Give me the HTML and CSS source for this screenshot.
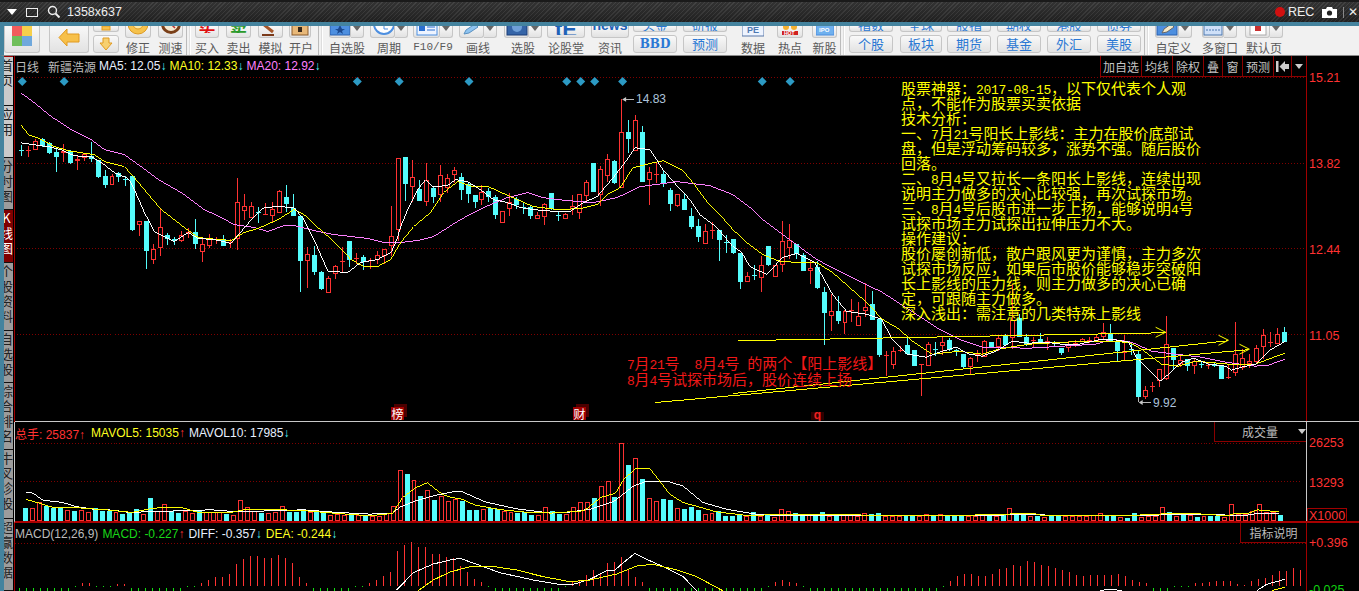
FILE: index.html
```html
<!DOCTYPE html>
<html lang="zh-CN">
<head>
<meta charset="utf-8">
<title>新疆浩源 日线</title>
<link rel="stylesheet" href="styles.css">
</head>
<body>
<header class="recbar">
  <svg class="rb-ico menu" width="12" height="8" viewBox="0 0 12 8"><path d="M1 1h10L6 7z" fill="#fff"/></svg>
  <span class="rb-win"></span>
  <svg class="rb-ico lens" width="14" height="14" viewBox="0 0 14 14"><circle cx="5.500" cy="5.500" r="4" fill="none" stroke="#eee" stroke-width="1.400"/><path d="M8.500 8.500l4 4" stroke="#eee" stroke-width="2"/></svg>
  <span class="rb-size">1358x637</span>
  <span class="rb-dot"></span><span class="rb-rec">REC</span>
  <svg class="rb-ico cam" width="15" height="11" viewBox="0 0 15 11"><path d="M0 2h4l1-2h5l1 2h4v9H0z" fill="#fff"/><circle cx="7.500" cy="6" r="2.600" fill="#222"/></svg>
  <span class="rb-sep"></span>
  <span class="rb-close">✕</span>
</header>

<nav class="toolbar">
  <div class="tool w36"><div class="btn tall"><svg width="20" height="20" viewBox="0 0 20 20"><rect width="10" height="10" fill="#f25c5c"/><rect x="10" width="10" height="10" fill="#f6cf4a"/><rect y="10" width="10" height="10" fill="#6fbe5a"/><rect x="10" y="10" width="10" height="10" fill="#6fa8dc"/></svg></div></div>
  <div class="tool w40 ml9"><div class="btn tall"><svg width="22" height="17" viewBox="0 0 22 17"><path d="M9 0v5h12v8H9v4L1 8.500z" fill="#f7c04a" stroke="#e09a20"/></svg></div></div>
  <div class="stack w26 ml4"><div class="btn stub"><svg width="10" height="5" viewBox="0 0 10 5"><rect x="1" width="8" height="4" fill="#f7c04a" stroke="#e09a20"/></svg></div><div class="btn low"><svg width="14" height="14" viewBox="0 0 14 14"><path d="M4 1h6v5h3l-6 7-6-7h3z" fill="#f7d070" stroke="#e09a20"/></svg></div></div>
  <div class="tool w26 ml6"><div class="btn"><svg width="20" height="11" viewBox="0 0 20 11"><circle cx="10" cy="-1" r="10" fill="#f5c24c" stroke="#dd9a22"/><circle cx="10" cy="-1" r="5" fill="#fbe9a8" stroke="#dd9a22"/></svg></div><span class="lbl">修正</span></div>
  <div class="tool w25 ml7"><div class="btn"><svg width="20" height="11" viewBox="0 0 20 11"><circle cx="10" cy="-1" r="10" fill="#7a3f18"/><circle cx="10" cy="-1" r="7" fill="#f6ead2"/><path d="M10-1l4 4" stroke="#b33" stroke-width="1.500"/></svg></div><span class="lbl">测速</span></div>
  <i class="sep ml3"></i>
  <div class="tool w24 ml5"><div class="btn"><b class="glyph red">买</b></div><span class="lbl">买入</span></div>
  <div class="tool w25 ml7"><div class="btn"><b class="glyph green">卖</b></div><span class="lbl">卖出</span></div>
  <div class="tool w25 ml7"><div class="btn"><svg width="20" height="11" viewBox="0 0 20 11"><path d="M2-1l10 8" stroke="#a5562a" stroke-width="3"/><path d="M1 10h12" stroke="#7a3a1a" stroke-width="2"/></svg></div><span class="lbl">模拟</span></div>
  <div class="tool w22 ml6"><div class="btn"><svg width="18" height="11" viewBox="0 0 18 11"><rect x="1" y="-2" width="16" height="12" fill="#e8b878" stroke="#8a5a2a"/><rect x="7" y="2" width="4" height="5" fill="#3a2a1a"/></svg></div><span class="lbl">开户</span></div>
  <i class="sep ml7"></i>
  <div class="tool w35 ml7"><div class="btn split"><span class="face"><svg width="20" height="10" viewBox="0 0 20 10"><rect y="-4" width="20" height="13" fill="#4d8fe0" stroke="#2a60b0"/><path d="M10-1l2 4h3l-3 2 1 3-3-2-3 2 1-3-3-2h3z" fill="#1c4a90"/></svg></span><span class="drop"></span></div><span class="lbl">自选股</span></div>
  <div class="tool w38 ml6"><div class="btn split"><span class="face"><svg width="22" height="11" viewBox="0 0 22 11"><circle cx="12" cy="-1" r="10" fill="#fff" stroke="#4d8fe0" stroke-width="2"/><path d="M12-1v5M12 4h4" stroke="#4d8fe0"/></svg></span><span class="drop"></span></div><span class="lbl">周期</span></div>
  <div class="tool w40 ml5"><div class="btn split"><span class="face"><svg width="22" height="11" viewBox="0 0 22 11"><rect x="1" y="-3" width="20" height="13" fill="#eef4ff" stroke="#4d8fe0"/><rect x="3" y="0" width="6" height="6" fill="#2a6fd0"/><path d="M11 2h8M11 5h8" stroke="#2a6fd0"/></svg></span><span class="drop"></span></div><span class="lbl mono">F10/F9</span></div>
  <div class="tool w38 ml6"><div class="btn split"><span class="face"><svg width="22" height="11" viewBox="0 0 22 11"><path d="M3 9l2-4 9-6 3 3-9 6z" fill="#8fc4f0" stroke="#5a90c0"/></svg></span><span class="drop"></span></div><span class="lbl">画线</span></div>
  <div class="tool w38 ml7"><div class="btn split"><span class="face"><svg width="22" height="11" viewBox="0 0 22 11"><rect x="1" y="-3" width="20" height="13" fill="#3565a8" stroke="#1c3e78"/><circle cx="11" cy="2" r="5" fill="#6fa0d8"/></svg></span><span class="drop"></span></div><span class="lbl">选股</span></div>
  <div class="tool w38 ml5"><div class="btn"><b class="glyph blue big">tE</b></div><span class="lbl">论股堂</span></div>
  <div class="tool w38 ml6"><div class="btn"><b class="glyph blue news">news</b></div><span class="lbl">资讯</span></div>
  <div class="stack w44 ml4"><div class="btn stub txt">头金</div><div class="btn low txt bold">BBD</div></div>
  <div class="stack w44 ml6"><div class="btn stub txt">研报</div><div class="btn low txt">预测</div></div>
  <div class="tool w24 ml14"><div class="btn bare"><svg width="22" height="11" viewBox="0 0 22 11"><rect y="-6" width="22" height="16" fill="#eef4ff" stroke="#5a78a8"/><text x="5" y="7" class="ico-text">PE</text></svg></div><span class="lbl">数据</span></div>
  <div class="tool w26 ml12"><div class="btn"><svg width="18" height="12" viewBox="0 0 18 12"><circle cx="5" cy="3" r="3" fill="#f5b030"/><circle cx="13" cy="3" r="3" fill="#f5b030"/><rect x="1" y="7" width="16" height="4" fill="#d02020"/><text x="3" y="11" class="ico-hot">HOT</text></svg></div><span class="lbl">热点</span></div>
  <div class="tool w25 ml9"><div class="btn"><svg width="18" height="12" viewBox="0 0 18 12"><rect y="-4" width="18" height="15" fill="#6fb0ee" stroke="#4d8fe0"/><text x="3" y="8" class="ico-ipo">IPO</text></svg></div><span class="lbl">新股</span></div>
  <i class="sep ml3"></i>
  <div class="stack w44 ml5"><div class="btn stub txt">指数</div><div class="btn low txt">个股</div></div>
  <div class="stack w42 ml7"><div class="btn stub txt">全球</div><div class="btn low txt">板块</div></div>
  <div class="stack w44 ml5"><div class="btn stub txt">股指</div><div class="btn low txt">期货</div></div>
  <div class="stack w44 ml6"><div class="btn stub txt">期权</div><div class="btn low txt">基金</div></div>
  <div class="stack w44 ml6"><div class="btn stub txt">港股</div><div class="btn low txt">外汇</div></div>
  <div class="stack w44 ml6"><div class="btn stub txt">债券</div><div class="btn low txt">美股</div></div>
  <i class="sep ml3"></i>
  <div class="tool w37 ml7"><div class="btn split"><span class="face"><svg width="22" height="11" viewBox="0 0 22 11"><rect x="1" y="-3" width="20" height="13" fill="#4d8fe0" stroke="#2a60b0"/><path d="M6 8l2-4 7-5 3 3-7 5z" fill="#f4e8c8" stroke="#666"/></svg></span><span class="drop"></span></div><span class="lbl">自定义</span></div>
  <div class="tool w35 ml10"><div class="btn split"><span class="face"><svg width="20" height="10" viewBox="0 0 20 10"><rect x="1" y="-3" width="18" height="12" fill="#cfe0f8" stroke="#4d78b0"/><path d="M3 4h14" stroke="#4d78b0" stroke-dasharray="2 1"/></svg></span><span class="drop"></span></div><span class="lbl">多窗口</span></div>
  <div class="tool w38 ml8"><div class="btn split"><span class="face"><svg width="20" height="11" viewBox="0 0 20 11"><rect x="2" y="-4" width="16" height="14" fill="#fff" stroke="#aaa"/><rect x="7" y="0" width="6" height="6" fill="#c83030"/></svg></span><span class="drop"></span></div><span class="lbl">默认页</span></div>
</nav>

<main class="work">
  <aside class="tabs">
    <a class="tab light h50">首页</a>
    <a class="tab light h52">应用</a>
    <a class="tab h52">分时图</a>
    <a class="tab on h53">K线图</a>
    <a class="tab h68">个股资料</a>
    <a class="tab h52">自选股</a>
    <a class="tab h67">综合排名</a>
    <a class="tab h69">牛叉诊股</a>
    <a class="tab h72">超赢数据</a>
  </aside>

  <div class="charts">
    <section class="pane price">
      <div class="plot">
        <svg id="price" class="canvas" viewBox="15 56 1291 366" aria-hidden="true"></svg>
        <div class="legend">
          <span class="gray cjk w-day">日线</span>
          <span class="gray cjk w-name">新疆浩源</span>
          <span class="white">MA5: 12.05<b class="cyan">↓</b></span>
          <span class="yellow">MA10: 12.33<b class="cyan">↓</b></span>
          <span class="magenta">MA20: 12.92<b class="cyan">↓</b></span>
        </div>
        <div class="chart-tools">
          <span class="ct w41">加自选</span><span class="ct w31">均线</span><span class="ct w31">除权</span><span class="ct w19">叠</span><span class="ct w20">窗</span><span class="ct w31">预测</span>
          <span class="ct w18"><svg width="13" height="11" viewBox="0 0 13 11"><path d="M0 0h2.500v11H0zM3.500 5.500L9 0v3h4v5H9v3z" fill="#ccc"/></svg></span>
          <span class="ct w15"><svg width="8" height="5" viewBox="0 0 8 5"><path d="M0 0h8L4 5z" fill="#ccc"/></svg></span>
        </div>
        <div class="note">
          <p>股票神器：<span class="lat">2017-08-15</span>，以下仅代表个人观</p>
          <p>点，不能作为股票买卖依据</p>
          <p>技术分析：</p>
          <p>一、<span class="lat">7</span>月<span class="lat">21</span>号阳长上影线：主力在股价底部试</p>
          <p>盘，但是浮动筹码较多，涨势不强。随后股价</p>
          <p>回落。</p>
          <p>二、<span class="lat">8</span>月<span class="lat">4</span>号又拉长一条阳长上影线，连续出现</p>
          <p>说明主力做多的决心比较强，再次试探市场。</p>
          <p>三、<span class="lat">8</span>月<span class="lat">4</span>号后股市进一步上扬，能够说明<span class="lat">4</span>号</p>
          <p>试探市场主力试探出拉伸压力不大。</p>
          <p>操作建议：</p>
          <p>股价屡创新低，散户跟风更为谨慎，主力多次</p>
          <p>试探市场反应，如果后市股价能够稳步突破阳</p>
          <p>长上影线的压力线，则主力做多的决心已确</p>
          <p>定，可跟随主力做多。</p>
          <p>深入浅出：需注意的几类特殊上影线</p>
        </div>
        <div class="note-red">
          <p><span class="lat">7</span>月<span class="lat">21</span>号<span class="gap2"></span><span class="lat">8</span>月<span class="lat">4</span>号<span class="gap1"></span>的两个【阳上影线】</p>
          <p><span class="lat">8</span>月<span class="lat">4</span>号试探市场后，股价连续上扬</p>
        </div>
        <span class="peak hi">14.83</span>
        <span class="peak lo">9.92</span>
        <span class="mark m-bang">榜</span>
        <span class="mark m-cai">财</span>
        <span class="mark m-q">q</span>
      </div>
      <div class="axis">
        <span class="tick" style="top:22px">15.21</span>
        <span class="tick" style="top:108px">13.82</span>
        <span class="tick" style="top:194px">12.44</span>
        <span class="tick" style="top:280px">11.05</span>
      </div>
    </section>

    <section class="pane vol">
      <div class="plot">
        <svg id="volume" class="canvas" viewBox="15 422 1291 100" aria-hidden="true"></svg>
        <div class="legend sub">
          <span class="red first"><span class="cjk">总手</span>: 25837<b>↑</b></span>
          <span class="yellow">MAVOL5: 15035<b class="red">↑</b></span>
          <span class="white">MAVOL10: 17985<b class="cyan">↓</b></span>
        </div>
        <div class="pick pick-vol"><span>成交量</span><svg width="8" height="5" viewBox="0 0 8 5"><path d="M0 0h8L4 5z" fill="#ccc"/></svg></div>
      </div>
      <div class="axis">
        <span class="tick" style="top:21px">26253</span>
        <span class="tick" style="top:61px">13293</span>
        <span class="tick unit">X1000</span>
      </div>
    </section>

    <section class="pane macd">
      <div class="plot">
        <svg id="macd" class="canvas" viewBox="15 523 1291 68" aria-hidden="true"></svg>
        <div class="legend sub">
          <span class="gray">MACD(12,26,9)</span>
          <span class="lime">MACD: -0.227<b class="red">↑</b></span>
          <span class="white">DIFF: -0.357<b class="cyan">↓</b></span>
          <span class="yellow">DEA: -0.244<b class="cyan">↓</b></span>
        </div>
        <div class="pick pick-macd">指标说明</div>
      </div>
      <div class="axis">
        <span class="tick" style="top:20px">+0.396</span>
        <span class="tick zero" style="top:67px">-0.025</span>
      </div>
    </section>
  </div>
</main>
<script src="chart.js"></script>
</body>
</html>
```
FILE: styles.css
```css
* { box-sizing: border-box; }
html, body { margin: 0; height: 591px; overflow: hidden; background: #000; }
body { font-family: "Noto Sans CJK SC", "Liberation Sans", sans-serif; font-size: 12px; }
p { margin: 0; }

/* recorder strip */
.recbar {
  height: 22px; display: flex; align-items: center; color: #eee;
  border-top: 2px solid #1a1a1a;
  background:
    repeating-linear-gradient(135deg, rgba(255,255,255,.05) 0 1px, rgba(0,0,0,.12) 1px 3px),
    linear-gradient(#3a3a3a, #242424);
  font-family: "Liberation Sans", sans-serif;
}
.menu { margin-left: 6px; }
.rb-win { width: 12px; height: 9px; margin-left: 8px; border: 1px solid #eee; }
.lens { margin-left: 9px; }
.rb-size { margin-left: 6px; font-size: 12.500px; }
.rb-dot { width: 10px; height: 10px; margin-left: auto; border-radius: 50%; background: #d01010; }
.rb-rec { width: 26px; margin-left: 3px; font-size: 12.500px; }
.cam { margin-left: 8px; }
.rb-sep { width: 1px; height: 11px; margin-left: 6px; background: #888; }
.rb-close { width: 11px; margin-left: 4px; font-size: 12px; white-space: nowrap; overflow: hidden; }

/* toolbar */
.toolbar {
  height: 34px; display: flex; overflow: hidden;
  border-top: 4px solid #44839e;
  border-left: 4px solid #44839e;
  border-bottom: 1px solid #8a8a8a;
  background: #f1f1f1; color: #5a5a5a;
}
.tool, .stack { height: 29px; flex: none; display: flex; flex-direction: column; justify-content: flex-end; }
.btn {
  flex: none; height: 12px; display: flex; align-items: flex-end; justify-content: center; overflow: hidden;
  border: 1px solid #c6c6c6; border-top: 0; border-radius: 0 0 3px 3px; padding-bottom: 1px;
  background: linear-gradient(#f9f9f9, #e2e2e2);
}
.btn.tall { height: 28px; margin-bottom: 2px; padding-bottom: 6px; }
.btn.bare { border: 0; background: none; }
.stub { height: 6px; margin-bottom: 3px; padding-bottom: 0; }
.low { height: 18px; margin-bottom: 2px; align-items: center; border-top: 1px solid #c6c6c6; border-radius: 3px; padding-bottom: 0; }
.txt { color: #2a78d4; font-size: 13px; line-height: 18px; }
.stub.txt { align-items: flex-end; line-height: 13px; }
.bold { font-family: "DejaVu Serif", serif; font-weight: bold; font-size: 12px; }
.lbl { height: 17px; line-height: 19px; text-align: center; white-space: nowrap; font-size: 12px; }
.lbl.mono { font-family: "Liberation Mono", monospace; font-size: 11px; }
.split { padding: 0; border: 0; background: none; overflow: visible; align-items: stretch; }
.face { flex: 1; display: flex; justify-content: center; align-items: flex-end; overflow: hidden; padding-bottom: 1px; border: 1px solid #c6c6c6; border-top: 0; border-radius: 0 0 3px 3px; background: linear-gradient(#f9f9f9, #e2e2e2); }
.drop { position: relative; width: 13px; flex: none; border: 1px solid #c6c6c6; border-left: 0; border-top: 0; border-radius: 0 0 3px 0; background: linear-gradient(#f9f9f9, #e2e2e2); }
.drop::after { content: ""; position: absolute; left: 2px; top: 0; border: 4px solid transparent; border-top: 5px solid #666; }
.glyph { font-size: 17px; line-height: 11px; height: 11px; overflow: hidden; margin-bottom: 3px; }
.glyph.big { font: bold 22px/11px "Liberation Sans", sans-serif; margin-bottom: 1px; }
.glyph.news { font: bold 14px/11px "Liberation Sans", sans-serif; margin-bottom: 5px; }
.red { color: #ff3232; } .green { color: #2a9a2a; } .blue { color: #1f62b8; }
.glyph.red { color: #e01010; }
.sep { flex: none; width: 4px; height: 29px; border-left: 1px solid #bbb; border-right: 1px solid #ddd; box-shadow: 1px 0 0 #fff; }
.ico-text { font: bold 9px "Liberation Sans", sans-serif; fill: #4d78b0; }
.ico-hot { font: bold 5px "Liberation Sans", sans-serif; fill: #fff; }
.ico-ipo { font: bold 6px "Liberation Sans", sans-serif; fill: #fff; }
.w22 { width: 22px; } .w24 { width: 24px; } .w25 { width: 25px; } .w26 { width: 26px; } .w35 { width: 35px; } .w36 { width: 36px; } .w37 { width: 37px; } .w38 { width: 38px; }
.w40 { width: 40px; } .w42 { width: 42px; } .w44 { width: 44px; }
.ml3 { margin-left: 3px; } .ml4 { margin-left: 4px; } .ml5 { margin-left: 5px; } .ml6 { margin-left: 6px; } .ml7 { margin-left: 7px; }
.ml8 { margin-left: 8px; } .ml9 { margin-left: 9px; } .ml10 { margin-left: 10px; } .ml12 { margin-left: 12px; } .ml14 { margin-left: 14px; }

/* workspace */
.work { height: 535px; display: flex; }
.tabs { width: 14px; flex: none; overflow: hidden; border-left: 4px solid #44839e; }
.tab {
  display: block; width: 9px; overflow: hidden; padding: 2px 0 0;
  writing-mode: vertical-rl; text-orientation: upright;
  font-size: 13px; line-height: 14px; letter-spacing: 2px; white-space: nowrap;
  color: #222; background: #9c9c9c; border-bottom: 1px solid #111;
}
.tab.light { background: #cacaca; }
.tab.light:first-child { border-top: 1px solid #a00000; }
.tab.on { background: #7f0000; color: #fff; }
.h50 { height: 50px; } .h52 { height: 52px; } .h53 { height: 53px; }
.h67 { height: 67px; } .h68 { height: 68px; } .h69 { height: 69px; } .h72 { height: 72px; }

.charts { flex: 1; min-width: 0; display: flex; flex-direction: column; border-left: 1px solid #a00000; }
.pane { display: grid; grid-template-columns: 1291px 1fr; }
.price { height: 366px; border-bottom: 1px solid #c8c8c8; }
.vol { height: 101px; margin-left: -1px; border-left: 1px solid #c8c8c8; border-bottom: 2px solid #a80000; }
.macd { flex: 1; }
.plot { position: relative; overflow: hidden; }
.canvas { position: absolute; left: 0; top: 0; width: 1291px; height: 100%; display: block; }
.axis { position: relative; border-left: 1px solid #a00000; font-family: "Liberation Sans", sans-serif; }
.vol .axis { border-left-color: #c8c8c8; }
.tick { position: absolute; left: 2px; color: #ff3232; font-size: 12.500px; line-height: 16px; transform: translateY(-8px); }
.unit { top: 86px; left: 0; height: 15px; padding: 0 1px; line-height: 14px; border: 1px solid #a00000; border-bottom: 0; transform: none; }
.zero { color: #10d010; }

.legend {
  position: relative; height: 20px; display: flex; align-items: center; white-space: nowrap;
  font-family: "Liberation Sans", "Noto Sans CJK SC", sans-serif; font-size: 12px;
}
.legend > span { margin-right: 3px; }
.legend b { font-weight: bold; }
.legend > .w-day { margin-right: 9px; }
.legend > .w-name { margin-right: 3px; }
.legend.sub { height: 22px; }
.legend.sub > span { margin-right: 4px; }
.legend.sub > .first { margin-right: 6px; }
.gray { color: #bcbcbc; } .white { color: #e8f0ff; } .yellow { color: #ffff20; } .magenta { color: #ff80ff; }
.cyan { color: #50f8f8; } .lime { color: #18d818; }
.cjk { font-family: "Noto Sans CJK SC", sans-serif; }

.chart-tools { position: absolute; top: 0; right: 0; height: 21px; display: flex; border-bottom: 1px solid #8a0000; color: #c4c4c4; font-size: 12px; }
.ct { display: flex; align-items: center; justify-content: center; border-left: 1px solid #8a0000; white-space: nowrap; }
.w41 { width: 41px; } .w31 { width: 31px; } .w19 { width: 19px; } .w20 { width: 20px; } .w18 { width: 18px; } .w15 { width: 15px; }

.note { position: absolute; left: 886px; top: 24px; color: #ffff00; font-size: 15px; line-height: 15px; white-space: nowrap; }
.note p { height: 15px; }
.note-red { position: absolute; left: 612px; top: 299px; color: #f01818; font-size: 15px; line-height: 16px; white-space: nowrap; }
.note-red p { height: 16px; }
.lat { display: inline-block; font-family: "Liberation Mono", monospace; font-size: 13px; letter-spacing: -.3px; line-height: 15px; }
.gap1 { display: inline-block; width: 7.500px; } .gap2 { display: inline-block; width: 15px; }
.peak { position: absolute; color: #aec4dc; font: 12px/16px "Liberation Sans", sans-serif; }
.hi { left: 621px; top: 35px; } .lo { left: 1138px; top: 339px; }
.mark { position: absolute; top: 351px; width: 13px; height: 13px; text-align: center; font-size: 12px; line-height: 13px; background: #a00000; color: #fff; box-shadow: 3px -3px 0 #4c0000; }
.m-bang { left: 376px; }
.m-cai { left: 558px; }
.m-q { left: 796px; top: 356px; height: 8px; line-height: 6px; background: #300000; box-shadow: none; color: #f02020; font-family: "Liberation Sans", sans-serif; font-weight: bold; }

.pick { position: absolute; top: 0; right: 0; height: 20px; display: flex; align-items: center; white-space: nowrap; border-left: 1px solid #8a0000; border-bottom: 1px solid #8a0000; color: #bcbcbc; font-size: 12px; }
.pick-vol { width: 92px; padding-left: 27px; gap: 20px; }
.pick-macd { width: 66px; justify-content: center; }
```
FILE: chart.js
```javascript
// Chart geometry: one candle every 7px starting at x = 19 (page pixels).
const NS = 'http://www.w3.org/2000/svg';
const X = i => 19 + 7 * i;
const C_RED = '#ff3232', C_CYAN = '#54fcfc';

// type, body top, body bottom, high, low
const candles = `c150,151,145,156 r150,151,146,157 r141,150,139,150 c139,146,138,147 c143,153,142,154 c152,157,148,172 r151,153,144,162 c151,163,150,164 r159,161,156,170 r154,158,153,161
c156,159,142,162 c160,177,160,178 c176,185,170,188 r176,185,174,185 c173,177,172,182 c179,180,176,186 c176,230,176,231 r221,225,221,236 c221,252,221,270 r250,261,245,265
r227,249,208,257 c235,240,233,246 c239,242,237,246 r235,242,231,243 r232,233,228,238 c232,245,219,250 r245,253,240,263 r240,247,234,249 r240,241,237,245 c239,247,235,247
r243,244,240,249 r202,239,178,251 r206,211,194,220 r206,218,202,218 c212,213,207,223 r214,215,203,215 r209,216,202,222 r191,213,190,213 c197,204,185,212 c208,216,194,216
c216,262,216,293 r255,262,248,289 c256,273,247,276 c273,290,272,291 r279,294,277,294 r267,275,266,280 r262,263,248,274 c242,261,242,268 r259,260,254,265 c258,263,256,271
r261,262,259,270 r256,261,252,265 r250,257,250,265 r236,247,206,257 r158,230,158,242 c157,184,157,201 r177,187,160,202 c189,201,180,201 r180,202,163,206 c188,197,187,203
r175,195,165,202 r178,188,174,193 r170,175,167,183 c177,190,173,200 c184,194,182,203 c195,202,195,208 r192,200,185,205 c191,197,188,202 c197,215,195,219 r211,223,211,223
r202,209,193,216 c199,205,197,209 c207,208,203,214 c207,216,205,219 r215,219,212,219 r204,217,203,225 c193,209,193,210 c215,216,212,221 r214,219,213,219 r206,209,195,215
r194,213,194,219 r182,196,180,203 c163,192,163,192 r169,195,166,206 r159,176,154,182 c161,183,160,184 r132,188,99,188 c132,139,120,153 r120,151,115,151 c132,182,126,182
r172,180,167,205 r174,175,163,183 c174,183,170,187 c190,204,188,211 r194,206,194,207 c199,210,193,210 c216,227,208,229 c226,237,219,243 r231,245,224,245 r230,231,222,240
c230,241,230,262 c243,244,235,254 c240,254,239,255 c254,283,254,290 r277,283,273,283 c276,277,266,281 r266,279,257,293 c247,266,247,267 r266,278,266,278 r242,266,221,273
r241,249,224,260 c245,255,245,260 c256,272,254,272 r269,272,262,285 c268,289,262,290 c293,314,288,346 r312,317,295,332 c312,322,297,325 r312,324,311,335 r311,312,300,323
r317,327,303,327 r308,312,284,318 c305,321,292,321 c320,356,320,358 r356,357,352,377 r352,366,348,370 r351,352,347,353 c346,355,338,355 c351,367,351,367 r365,366,365,397
r345,367,343,367 c350,351,343,357 r343,347,338,356 c341,351,339,352 c351,353,350,357 c355,368,355,369 r359,368,358,375 r355,356,351,363 r342,358,341,358 c343,348,343,349
r339,348,337,352 c337,346,335,346 r321,339,285,350 c319,338,315,338 c338,345,335,347 r341,342,338,349 c340,343,334,345 r342,345,338,351 c343,344,342,347 c349,354,349,356
r345,349,342,353 r344,345,341,348 r340,343,339,343 r341,342,338,344 r338,342,336,342 r333,338,324,340 c335,343,325,343 c343,352,343,363 r352,354,336,362 c350,351,345,356
c355,398,352,398 r391,398,387,400 r387,388,383,393 r370,382,370,388 r345,380,317,381 c349,361,349,370 r361,365,356,368 c360,367,360,372 r362,367,360,375 c365,366,363,369
r366,367,363,370 c365,367,363,368 c367,380,366,380 r378,379,366,380 r355,374,323,377 r359,369,350,371 r362,365,355,369 r349,363,346,364 r336,348,330,360 r343,344,333,348
r335,345,329,345 c333,343,328,343`.trim().split(/\s+/).map(s => {
  const [top, bot, hi, lo] = s.slice(1).split(',').map(Number);
  return { red: s[0] === 'r', top, bot, hi, lo };
});

const ma5 = '19,143 33,145 47,147 60,150 70,155 80,157 90,157 100,163 113,173 127,179 133,190 143,213 153,232 163,237 173,242 187,233 197,239 213,240 230,244 240,232 253,217 263,208 277,207 293,208 303,220 313,240 327,272 347,273 360,263 377,260 390,253 397,237 400,227 407,210 417,190 425,180 432,187 447,186 455,180 467,182 480,190 493,200 507,203 520,208 533,210 557,212 570,212 583,203 597,197 613,178 627,160 635,148 650,150 663,170 677,186 690,200 700,215 717,228 733,247 742,253 750,267 767,275 783,258 797,254 815,263 823,277 833,295 847,312 867,315 882,320 893,340 908,355 927,358 940,353 957,348 970,355 983,357 997,352 1013,342 1030,344 1047,343 1063,345 1080,345 1103,340 1113,340 1130,343 1137,357 1147,368 1162,382 1170,375 1183,363 1195,359 1210,365 1227,367 1233,371 1243,368 1257,365 1270,352 1287,342';
const ma10 = '19,125 27,135 38,139 53,147 67,151 80,153 93,155 103,162 123,167 133,178 147,195 160,210 183,228 197,238 217,240 230,241 243,233 257,229 277,220 293,210 303,215 317,228 333,242 350,260 363,267 377,267 390,260 400,243 413,227 430,213 443,193 457,182 473,187 488,187 510,197 533,207 557,210 580,209 597,205 607,195 620,188 633,168 653,163 663,161 683,171 693,183 707,202 720,215 733,230 747,243 763,255 780,262 800,263 817,263 833,273 850,288 867,303 883,320 900,330 913,342 933,355 960,352 983,355 1000,350 1017,347 1030,345 1063,343 1097,342 1130,343 1143,350 1163,365 1180,367 1197,362 1230,365 1257,365 1270,360 1287,354';
const ma20 = '19,93 29,100 50,117 70,130 90,140 103,150 123,155 137,165 157,180 180,193 203,210 220,218 233,225 253,228 267,232 283,226 293,226 317,232 333,235 367,239 383,243 400,243 417,241 433,237 460,220 483,208 507,198 527,193 543,198 567,201 593,203 617,198 640,187 677,182 710,186 733,195 753,210 763,220 783,235 817,260 850,277 883,293 917,315 940,330 960,340 983,348 1030,349 1063,347 1097,345 1113,340 1133,343 1153,352 1177,355 1203,358 1227,363 1257,367 1270,366 1287,360';

// Volume bar tops and MACD bar tops, read at 3x; y = 420 + v / 3.
const volTop = [267,267,250,260,266,266,272,276,272,280,268,276,276,280,285,283,270,286,237,277,256,275,282,275,283,275,280,280,280,285,288,244,265,275,282,282,280,262,278,278,270,278,278,280,287,285,287,288,288,290,290,290,283,262,151,165,184,232,214,243,232,247,240,245,273,273,270,267,271,277,280,282,278,288,288,265,277,285,285,265,250,250,237,202,187,234,70,135,115,180,238,247,240,243,268,270,264,274,286,283,277,292,291,287,292,280,292,286,295,271,275,282,284,287,285,280,292,290,288,288,290,283,286,282,292,292,292,292,292,292,286,292,286,290,292,292,292,292,286,292,292,286,268,284,288,292,292,295,292,292,292,292,292,292,289,283,292,292,295,297,283,295,292,292,265,280,292,288,288,295,292,292,292,295,256,285,285,277,254,278,278,288];
// >0 red bar top, -1 green bar, -2 tiny green bar
const macdTop = [-1,-1,-1,-1,-1,-1,-1,-1,-2,490,490,-2,-2,-2,492,492,-1,-1,-1,-1,-1,-1,-1,-1,-2,-2,490,480,470,470,463,432,417,408,408,413,413,405,413,430,470,490,-1,-1,-1,-1,-1,-1,-2,-2,490,480,468,455,392,375,366,381,381,403,403,412,415,438,456,477,487,-2,-1,-1,-1,-1,-1,-1,-1,-1,-1,-1,-2,485,480,465,450,460,430,425,410,450,470,486,-1,-1,-1,-1,-1,-1,-1,-1,-1,-1,-1,-1,-1,-1,-1,-1,-1,-2,486,480,486,489,-2,-1,-1,-1,-1,-1,-1,-1,-1,-1,-1,-1,-1,-1,-1,-1,-1,-1,-1,-1,-2,484,468,462,462,468,468,462,447,444,435,437,423,426,435,438,444,449,456,465,468,466,465,465,464,462,467,480,486,489,-1,-1,-1,-2,-2,-2,489,489,486,483,483,483,491,495,484,476,475,465,452,452,444,450];

const zoomed = (ox, flat) => flat.map((v, k) => k % 2 ? 420 + v / 3 : ox + v / 3);
const toPts = a => a.reduce((s, v, k) => s + (k % 2 ? ',' + v.toFixed(1) + ' ' : v.toFixed(1)), '');

const volWhite = [...zoomed(0,[58,218,80,222,110,243,170,250,210,262,260,270,320,273,370,280,430,278,620,272,700,278,900,272,1000,280,1100,285,1170,283,1190,265,1240,245,1300,228]),...zoomed(450,[0,218,30,217,100,248,200,270,300,282,350,280,420,270,490,247,550,200,590,185,650,185,700,200,760,250,830,270,920,285,1000,290]),...zoomed(900,[0,290,300,290,340,286,400,286,500,290,780,290,800,286,900,286,1000,288,1060,288,1100,282,1155,283])];
const volYellow = [...zoomed(0,[58,240,100,252,140,265,200,265,300,272,380,280,440,268,480,265,530,265,580,280,680,280,720,272,800,272,880,273,1000,283,1100,290,1170,283,1200,235,1240,205,1275,190,1320,225]),...zoomed(450,[0,235,30,240,70,258,150,272,230,280,300,282,400,275,450,235,495,222,520,180,555,148,600,148,660,225,700,250,800,278,900,290,1000,285,1100,285]),...zoomed(900,[0,290,160,290,330,285,410,283,440,290,600,290,690,290,790,285,890,283,1000,290,1020,284,1060,284,1090,272,1155,278])];
const diffSegs = [[...zoomed(0,[1190,510,1240,458,1300,432]),...zoomed(450,[0,420,30,415,100,440,150,458,250,480,320,492,370,493,420,478,470,452,495,450,520,428,555,400,590,418,640,440,700,470,740,513])],zoomed(900,[600,512,630,507,665,512]),zoomed(900,[1070,512,1100,493,1155,478])];
const deaSegs = [[...zoomed(0,[1255,512,1300,480]),...zoomed(450,[0,456,60,440,120,438,200,450,280,470,360,485,420,480,500,462,560,438,610,433,680,450,740,470,820,513])],zoomed(900,[1115,512,1155,502])];

function add(svg, tag, attrs) {
  const el = document.createElementNS(NS, tag);
  for (const k in attrs) el.setAttribute(k, attrs[k]);
  svg.appendChild(el);
  return el;
}
const line = (svg, x1, y1, x2, y2, stroke, extra) => add(svg, 'line', { x1, y1, x2, y2, stroke, 'shape-rendering': 'crispEdges', ...extra });
const poly = (svg, points, stroke) => add(svg, 'polyline', { points, stroke, fill: 'none', 'shape-rendering': 'crispEdges' });
const grid = (svg, y, color = '#800000') => line(svg, 15, y + .5, 1306, y + .5, color, { 'stroke-dasharray': '1 2' });
// Bars are 5px wide, centred on the candle's pixel column.
const hollowBar = (svg, x, top, height, color) => add(svg, 'rect', { x: x - 1.5, y: top + .5, width: 4, height, fill: '#000', stroke: color, 'shape-rendering': 'crispEdges' });
const solidBar = (svg, x, top, height, color) => add(svg, 'rect', { x: x - 2, y: top, width: 5, height, fill: color, 'shape-rendering': 'crispEdges' });

/* price pane */
const price = document.getElementById('price');
[77, 163, 249, 335].forEach(y => grid(price, y));
[20, 62, 356, 398, 468, 566, 580, 594, 622, 762, 790].forEach(x =>
  add(price, 'polygon', { points: `${x + .5},77 ${x + 5},81.500 ${x + .5},86 ${x - 4},81.500`, fill: '#2c9ac4' }));

candles.forEach((c, i) => {
  const x = X(i), color = c.red ? C_RED : C_CYAN, mid = x + .5;
  if (c.hi < c.top) line(price, mid, c.hi, mid, c.top, color);
  if (c.lo > c.bot) line(price, mid, c.bot, mid, c.lo, color);
  if (c.bot - c.top <= 1) line(price, x - 2, c.top + .5, x + 3, c.top + .5, color);
  else if (c.red) hollowBar(price, x, c.top, c.bot - c.top - 1, color);
  else solidBar(price, x, c.top, c.bot - c.top, color);
});
poly(price, ma20, '#ff80ff');
poly(price, ma10, '#ffff00');
poly(price, ma5, '#ffffff');

const trends = [
  [[738, 341, 1167, 333], [1157, 328, 1167, 333, 1157, 338]],
  [[733, 394, 1230, 341], [1220, 336, 1230, 341, 1220, 346]],
  [[655, 403, 1250, 350], [1241, 345, 1251, 350, 1241, 355]],
];
trends.forEach(([l, head]) => {
  line(price, l[0], l[1] + .5, l[2], l[3] + .5, '#ffff00');
  add(price, 'polyline', { points: `${head[0]},${head[1]} ${head[2]},${head[3]} ${head[4]},${head[5]}`, fill: 'none', stroke: '#ffff00' });
});

// extreme markers
[[634, 99, 622], [1152, 403, 1140]].forEach(([from, y, to]) => {
  line(price, from, y + .5, to + 2, y + .5, '#b8b8b8');
  add(price, 'polygon', { points: `${to},${y + .5} ${to + 4},${y - 2} ${to + 4},${y + 3}`, fill: '#c8c8c8' });
});
// the wicks reach the markers
line(price, 621.5, 99, 621.5, 132, C_RED);
line(price, 1139.5, 398, 1139.5, 403, '#b8b8b8');

/* volume pane */
const vol = document.getElementById('volume');
[443, 482].forEach(y => grid(vol, y));
volTop.forEach((v, i) => {
  const x = X(i), top = Math.round(420 + v / 3);
  if (candles[i].red) hollowBar(vol, x, top, 521 - top, C_RED);
  else solidBar(vol, x, top, 522 - top, C_CYAN);
});
poly(vol, toPts(volWhite), '#ffffff');
poly(vol, toPts(volYellow), '#ffff00');

/* MACD pane */
const macd = document.getElementById('macd');
grid(macd, 543);
macdTop.forEach((v, i) => {
  const mid = X(i) + .5;
  if (v > 0) line(macd, mid, 420 + v / 3, mid, 586, C_RED);
  else if (v === -1) line(macd, mid, 588, mid, 591, '#10e010');
  else line(macd, mid, 586, mid, 587, '#10e010');
});
diffSegs.forEach(s => poly(macd, toPts(s), '#ffffff'));
deaSegs.forEach(s => poly(macd, toPts(s), '#ffff00'));
```
